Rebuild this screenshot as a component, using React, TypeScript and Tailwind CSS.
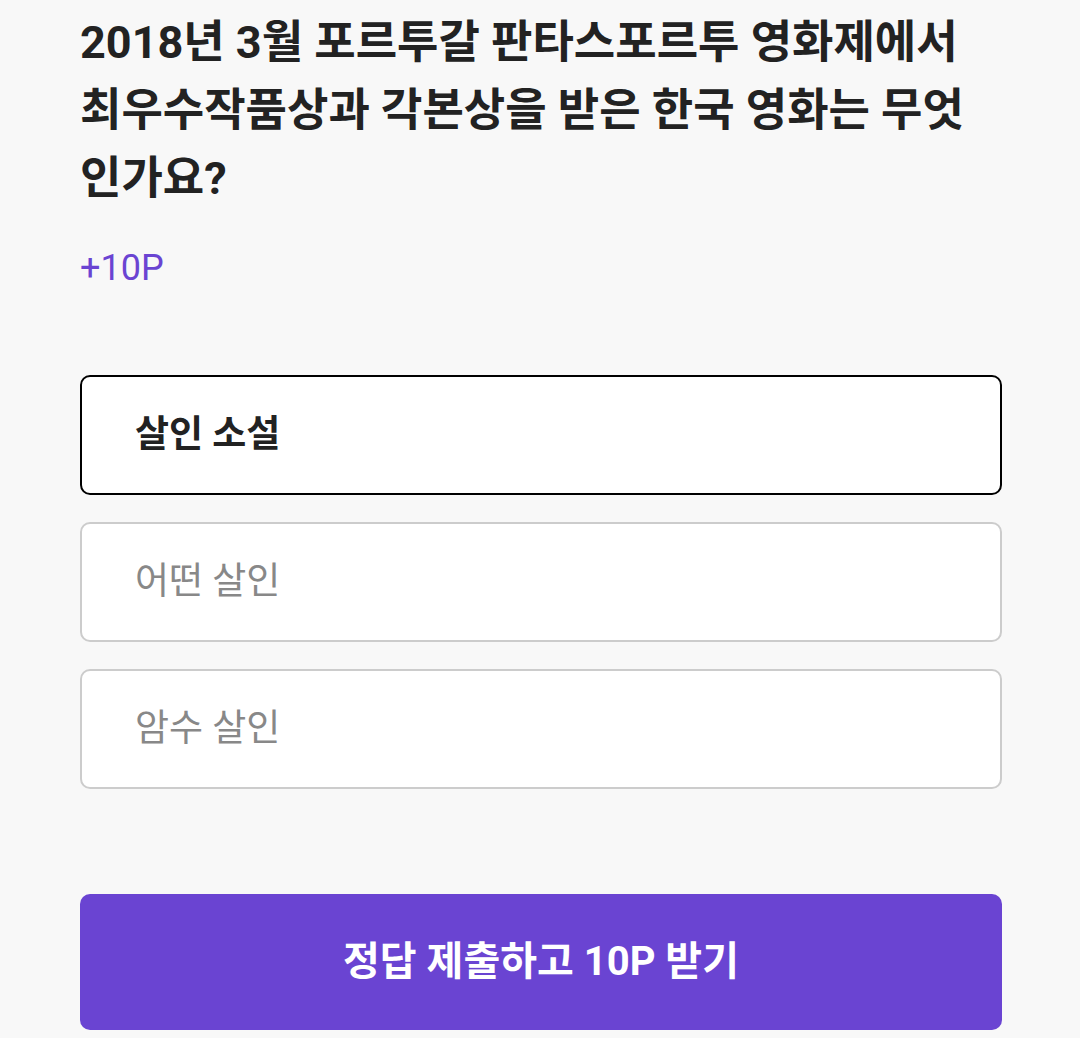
const options = [
  { label: "살인 소설", selected: true },
  { label: "어떤 살인", selected: false },
  { label: "암수 살인", selected: false },
];

export default function App() {
  return (
    <div
      className="min-h-[1038px] w-full bg-[#f8f8f8] px-[80px] pt-[9px]"
      style={{ fontFamily: 'Roboto, "Noto Sans CJK KR", sans-serif' }}
    >
      <h1 className="w-[922px] text-[45px] font-bold leading-[68px] text-[#222222]">
        2018년 3월 포르투갈 판타스포르투 영화제에서 최우수작품상과 각본상을 받은 한국 영화는 무엇인가요?
      </h1>
      <p className="mt-[33px] text-[36px] leading-[44px] text-[#6a44d2]">+10P</p>

      <div className="mt-[85px] flex w-[922px] flex-col gap-[27px]">
        {options.map((o) => (
          <button
            key={o.label}
            className={
              o.selected
                ? "flex h-[120px] items-center rounded-[10px] border-2 border-black bg-white pl-[53px] text-[37px] font-bold text-[#222222]"
                : "flex h-[120px] items-center rounded-[10px] border-2 border-[#cccccc] bg-white pl-[53px] text-[37px] text-[#888888]"
            }
          >
            {o.label}
          </button>
        ))}
      </div>

      <button className="mt-[105px] flex h-[136px] w-[922px] items-center justify-center rounded-[10px] bg-[#6a44d2] text-[40px] font-bold text-white">
        정답 제출하고 10P 받기
      </button>
    </div>
  );
}
